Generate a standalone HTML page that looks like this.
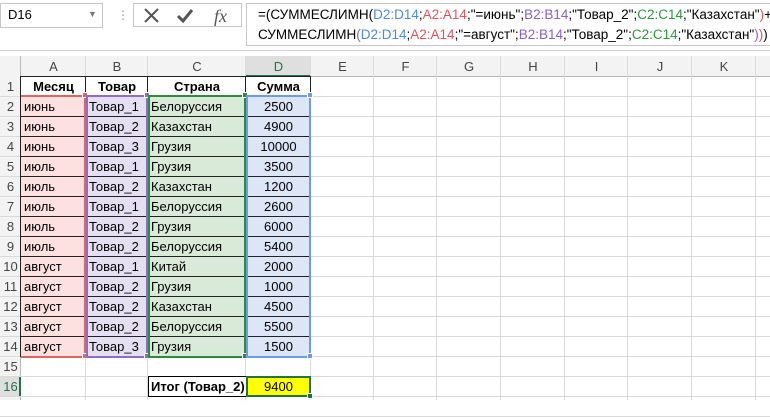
<!DOCTYPE html>
<html><head><meta charset="utf-8"><style>
body{margin:0;width:770px;height:400px;overflow:hidden;background:#fff;font-family:"Liberation Sans",Arial,sans-serif;position:relative}
.a{position:absolute;box-sizing:border-box}
.t{position:absolute;font-size:13px;line-height:20px;white-space:nowrap;color:#000}
.f{font-size:13.5px;line-height:20px;position:absolute;white-space:nowrap;left:258px}
.r{color:#e8505a}.b{color:#4a8ae6}.p{color:#8e5ec8}.g{color:#2a9a3a}
</style></head><body>
<div class="a" style="left:0;top:0;width:770px;height:50px;background:#fff"></div>
<div class="a" style="left:0;top:3px;width:103px;height:25px;border:1px solid #c6c6c6"></div>
<div class="t" style="left:8px;top:5px;font-size:13px">D16</div>
<div class="t" style="left:88px;top:4px;font-size:9px;color:#777">▼</div>
<div class="t" style="left:117px;top:5px;color:#999;font-size:12px">⋮</div>
<div class="a" style="left:133px;top:3px;width:109px;height:24px;border:1px solid #c6c6c6"></div>
<svg class="a" style="left:140px;top:5px" width="100" height="22"><path d="M5 4L18 17M18 4L5 17" stroke="#555" stroke-width="2"/><path d="M38 11l5 5 9-11" stroke="#555" stroke-width="3" fill="none"/><text x="74" y="17" font-family="Liberation Serif" font-style="italic" font-size="18" fill="#555">fx</text></svg>
<div class="a" style="left:246px;top:3px;width:530px;height:43px;border:1px solid #c6c6c6"></div>
<div class="f" style="top:5px">=(СУММЕСЛИМН(<span class="b">D2:D14</span>;<span class="r">A2:A14</span>;"=июнь";<span class="p">B2:B14</span>;"Товар_2";<span class="g">C2:C14</span>;"Казахстан"<span class="r">)</span>+<span class="r">(</span></div>
<div class="f" style="top:25px">СУММЕСЛИМН<span class="p">(</span><span class="b">D2:D14</span>;<span class="r">A2:A14</span>;"=август";<span class="p">B2:B14</span>;"Товар_2";<span class="g">C2:C14</span>;"Казахстан"<span class="p">)</span><span class="r">)</span>)</div>
<div class="a" style="left:0;top:50px;width:770px;height:1px;background:#d4d4d4"></div>
<div id="g"></div>
<script>
var cols=[21,86,148,246,311,374,437,501,565,628,692,756,820];
var L="ABCDEFGHIJK";var h='';
h+='<div class="a" style="left:0;top:56px;width:770px;height:21px;background:#f3f3f3;border-bottom:1px solid #b8b8b8"></div>';
h+='<div class="a" style="left:0;top:56px;width:21px;height:344px;background:#f3f3f3;border-right:1px solid #b8b8b8"></div>';
h+='<div class="a" style="left:246px;top:56px;width:65px;height:21px;background:#dfdfdf;border-bottom:2px solid #217346"></div>';
h+='<div class="a" style="left:0;top:377px;width:21px;height:20px;background:#dfdfdf;border-right:2px solid #217346"></div>';
for(var i=0;i<11;i++){h+='<div class="t" style="left:'+cols[i]+'px;width:'+(cols[i+1]-cols[i])+'px;top:57px;text-align:center;color:'+(i==3?'#217346':'#444')+'">'+L[i]+'</div>';
h+='<div class="a" style="left:'+(cols[i+1]-1)+'px;top:56px;width:1px;height:344px;background:#dadada"></div>';}
for(var r=1;r<=17;r++){var y=77+(r-1)*20;
h+='<div class="a" style="left:0;top:'+(y+19)+'px;width:770px;height:1px;background:#dadada"></div>';
if(r<=16)h+='<div class="t" style="left:0;width:21px;text-align:center;top:'+y+'px;color:'+(r==16?'#217346':'#444')+'">'+r+'</div>';}
var fills=['#fde1e1','#e5e0f1','#d9ead9','#dde6f7'];
for(var c=0;c<4;c++)h+='<div class="a" style="left:'+cols[c]+'px;top:97px;width:'+(cols[c+1]-cols[c])+'px;height:260px;background:'+fills[c]+'"></div>';
// black grid of table
for(var r=0;r<=14;r++)h+='<div class="a" style="left:21px;top:'+(76+r*20)+'px;width:290px;height:1px;background:#222"></div>';
for(var c=0;c<5;c++)h+='<div class="a" style="left:'+(cols[c]-1)+'px;top:76px;width:1px;height:281px;background:#222"></div>';
var bc=['#e06666','#8e6cc8','#2e8b3e','#6d9be8'];
for(var c=0;c<4;c++){var x=cols[c],w=cols[c+1]-cols[c];
h+='<div class="a" style="left:'+x+'px;top:95px;width:'+w+'px;height:263px;border:2px solid '+bc[c]+';border-left-width:'+(c==0?0:2)+'px"></div>';
h+='<div class="a" style="left:'+(x+w-4)+'px;top:92px;width:6px;height:6px;background:'+bc[c]+';border:1px solid #fff"></div>';
h+='<div class="a" style="left:'+(x+w-4)+'px;top:353px;width:6px;height:6px;background:'+bc[c]+';border:1px solid #fff"></div>';}
var data=[["июнь","Товар_1","Белоруссия",2500],["июнь","Товар_2","Казахстан",4900],["июнь","Товар_3","Грузия",10000],["июль","Товар_1","Грузия",3500],["июль","Товар_2","Казахстан",1200],["июль","Товар_1","Белоруссия",2600],["июль","Товар_2","Грузия",6000],["июль","Товар_2","Белоруссия",5400],["август","Товар_1","Китай",2000],["август","Товар_2","Грузия",1000],["август","Товар_2","Казахстан",4500],["август","Товар_2","Белоруссия",5500],["август","Товар_3","Грузия",1500]];
var hd=["Месяц","Товар","Страна","Сумма"];
for(var c=0;c<4;c++)h+='<div class="t" style="font-weight:bold;left:'+cols[c]+'px;width:'+(cols[c+1]-cols[c])+'px;text-align:center;top:77px">'+hd[c]+'</div>';
for(var r=0;r<13;r++){var y=97+r*20;for(var c=0;c<3;c++)h+='<div class="t" style="left:'+(cols[c]+3)+'px;top:'+y+'px">'+data[r][c]+'</div>';
h+='<div class="t" style="left:246px;width:65px;text-align:center;top:'+y+'px">'+data[r][3]+'</div>';}
h+='<div class="a" style="left:148px;top:376px;width:99px;height:21px;border:1px solid #000;background:#fff"></div>';
h+='<div class="t" style="left:151px;top:377px;font-weight:bold">Итог (Товар_2)</div>';
h+='<div class="a" style="left:246px;top:376px;width:65px;height:21px;background:#ffff00;border:2px solid #217346"></div>';
h+='<div class="t" style="left:246px;width:65px;text-align:center;top:377px">9400</div>';
h+='<div class="a" style="left:307px;top:393px;width:6px;height:6px;background:#217346;border:1px solid #fff"></div>';
document.getElementById('g').innerHTML=h;
</script>
</body></html>
